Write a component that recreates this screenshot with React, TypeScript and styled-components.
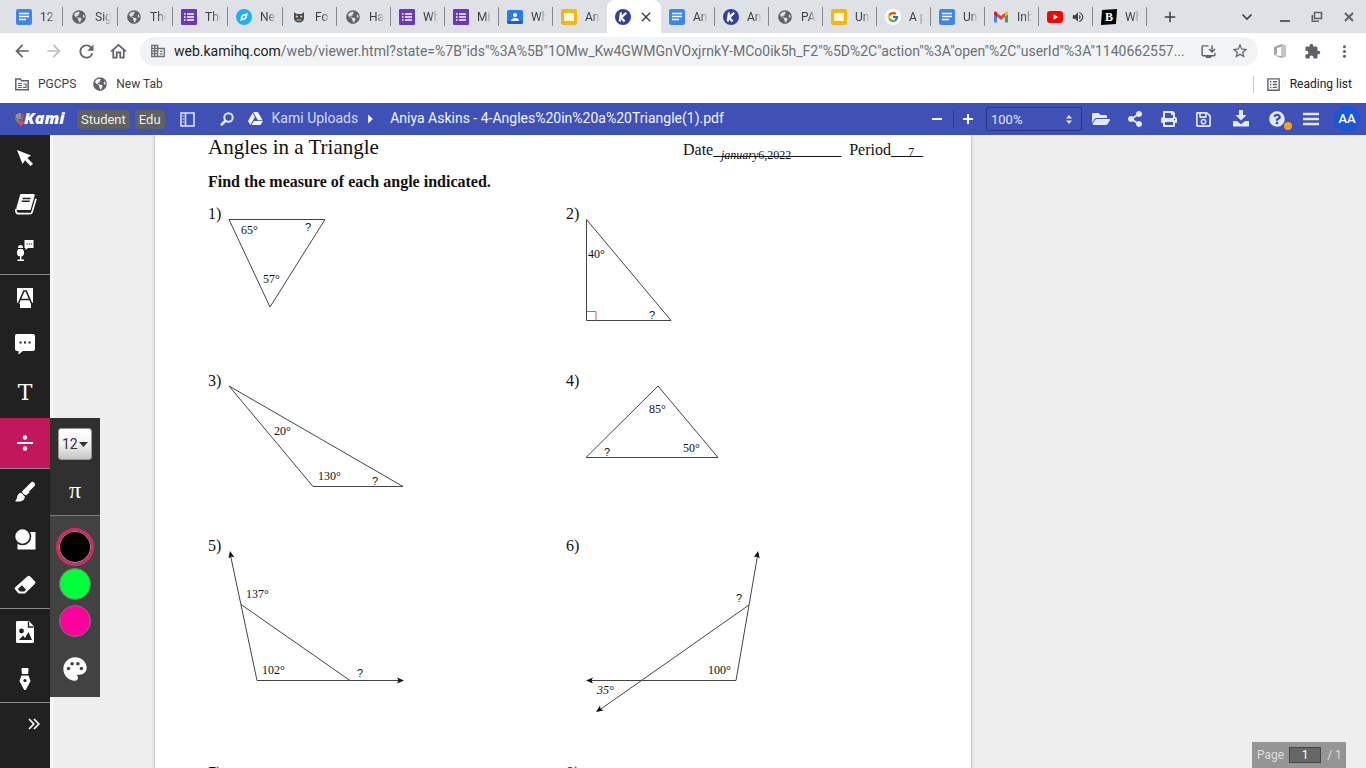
import React from "react";
import styled, { createGlobalStyle, css } from "styled-components";
import {
  MdArrowBack, MdArrowForward, MdRefresh, MdOutlineHome, MdStarBorder, MdExtension,
  MdMoreVert, MdAdd, MdClose, MdInstallDesktop, MdVolumeUp, MdArrowRight, MdPalette, MdOutlineListAlt,
} from "react-icons/md";
import {
  FaFolderOpen, FaShareAlt, FaPrint, FaRegSave, FaQuestionCircle, FaGoogleDrive, FaGlobeAmericas,
} from "react-icons/fa";
import { FcGoogle } from "react-icons/fc";

const Global = createGlobalStyle`
  *, *::before, *::after { box-sizing: border-box; }
  body { margin: 0; font-family: Roboto, "Liberation Sans", sans-serif; font-size: 14px; color: #3c4043; }
  button { border: 0; padding: 0; background: none; color: inherit; font: inherit; cursor: pointer; }
  a { color: inherit; text-decoration: none; }
  svg { display: block; flex: none; }
`;

const Window = styled.div`
  display: flex;
  flex-direction: column;
  height: 100vh;
  overflow: hidden;
`;

/* ---------- browser chrome ---------- */

const TabStrip = styled.div`
  display: flex;
  height: 33px;
  padding-left: 8px;
  background: #dee1e6;
`;

const Tab = styled.button<{ $active?: boolean; $first?: boolean; $line?: boolean }>`
  display: flex;
  align-items: center;
  gap: 8px;
  flex: 0 1 ${(p) => (p.$first ? 55 : 54)}px;
  min-width: 0;
  padding: 0 7px 0 8px;
  position: relative;
  font-size: 12px;
  ${(p) => p.$active && css`
    background: #fff;
    border-radius: 8px 8px 0 0;
    gap: 7px;
  `}
  ${(p) => p.$line && css`
    &::after {
      content: "";
      position: absolute;
      right: 0;
      top: 7px;
      height: 19px;
      width: 1px;
      background: #85888c;
    }
  `}
`;

const TabTitle = styled.span`
  flex: 1;
  min-width: 0;
  overflow: hidden;
  white-space: nowrap;
  text-align: left;
  mask-image: linear-gradient(to right, #000 50%, transparent);
`;

const TabGap = styled.div`
  flex: 1;
`;

const StripButton = styled.button<{ $w: number }>`
  display: flex;
  align-items: center;
  justify-content: center;
  width: ${(p) => p.$w}px;
  color: #3c4043;
`;

const NavBar = styled.div`
  display: flex;
  align-items: center;
  height: 36px;
  padding: 0 6px;
  background: #fff;
  color: #5f6368;
`;

const NavButton = styled.button<{ $dim?: boolean }>`
  display: flex;
  align-items: center;
  justify-content: center;
  width: 32px;
  height: 28px;
  color: ${(p) => (p.$dim ? "#babcbe" : "#5f6368")};
`;

const Address = styled.div`
  display: flex;
  align-items: center;
  flex: 1;
  min-width: 0;
  height: 29px;
  margin: 0 6px;
  padding: 0 2px 0 10px;
  border-radius: 15px;
  background: #f1f3f4;
`;

const Url = styled.div`
  flex: 1;
  min-width: 0;
  margin-left: 8px;
  overflow: hidden;
  white-space: nowrap;
  text-overflow: ellipsis;
  font-size: 14px;
  color: #6c7074;
  b { font-weight: 400; color: #202124; }
`;

const BookmarkBar = styled.div`
  display: flex;
  align-items: center;
  height: 34px;
  padding: 0 14px 4px 15px;
  background: #fff;
  font-size: 12px;
  gap: 17px;
`;

const Bookmark = styled.a<{ $last?: boolean }>`
  display: flex;
  align-items: center;
  gap: 9px;
  ${(p) => p.$last && css`
    gap: 8px;
    margin-left: auto;
    padding-left: 11px;
    border-left: 1px solid #c8cacd;
    color: #202124;
  `}
`;

/* ---------- Kami bar ---------- */

const AppBar = styled.header`
  display: flex;
  align-items: center;
  height: 32px;
  padding: 0 2px 0 14px;
  background: #3f51b5;
  color: #e4e8fb;
`;

const Logo = styled.a`
  display: flex;
  align-items: center;
  width: 63px;
`;

const LogoText = styled.span`
  margin-left: -3px;
  padding-bottom: 2px;
  font: italic 800 16px/20px "Open Sans", Lato, sans-serif;
  color: #fff;
`;

const Badge = styled.span`
  height: 19px;
  margin-right: 5px;
  padding: 0 4px;
  border-radius: 4px;
  background: #616161;
  color: #eee;
  font-size: 13px;
  line-height: 19px;
`;

const BarButton = styled.button<{ $w: number }>`
  display: flex;
  align-items: center;
  justify-content: center;
  position: relative;
  width: ${(p) => p.$w}px;
  height: 32px;
`;

const Crumb = styled.a`
  display: flex;
  align-items: center;
  gap: 9px;
  padding-bottom: 2px;
  white-space: nowrap;
  color: #d3d9f7;
`;

const FileName = styled.span`
  flex: 1;
  min-width: 0;
  margin-left: 8px;
  padding-bottom: 2px;
  overflow: hidden;
  white-space: nowrap;
  text-overflow: ellipsis;
  color: #f2f4ff;
`;

const BarLine = styled.span`
  width: 1px;
  height: 18px;
  background: #2f3e96;
`;

const ZoomBox = styled.label`
  display: flex;
  align-items: center;
  position: relative;
  margin: 0 2px 0 4px;
  svg { position: absolute; right: 10px; pointer-events: none; }
`;

const ZoomSelect = styled.select`
  appearance: none;
  width: 96px;
  height: 24px;
  padding: 0 4px;
  border: 1px solid #2b388a;
  border-radius: 2px;
  background: transparent;
  color: #e4e8fb;
  font: 13px Roboto, sans-serif;
`;

const Avatar = styled.span`
  width: 26px;
  height: 26px;
  border-radius: 50%;
  background: #1a56d8;
  color: #fff;
  font-size: 13px;
  font-weight: 500;
  line-height: 26px;
`;

const Dot = styled.i`
  position: absolute;
  right: 0;
  bottom: 5px;
  width: 8px;
  height: 8px;
  border-radius: 50%;
  background: #f9a01b;
`;

/* ---------- tools ---------- */

const Workspace = styled.div`
  display: flex;
  flex: 1;
  min-height: 0;
`;

const Sidebar = styled.nav`
  position: relative;
  z-index: 1;
  flex: 0 0 50px;
  background: #212121;
  color: #fff;
`;

const ToolGroup = styled.div`
  border-bottom: 1px solid #8a8a8a;
`;

const ToolSlot = styled.div`
  position: relative;
`;

const Tool = styled.button<{ $h?: number; $active?: boolean; $end?: boolean }>`
  display: flex;
  align-items: center;
  justify-content: ${(p) => (p.$end ? "flex-end" : "center")};
  width: 100%;
  height: ${(p) => p.$h ?? 46}px;
  padding: ${(p) => (p.$end ? "0 10px 0 0" : "0")};
  background: ${(p) => (p.$active ? "#c2185b" : "transparent")};
`;

const TextGlyph = styled.span`
  font: 22px/24px "DejaVu Serif", serif;
`;

const Flyout = styled.div`
  position: absolute;
  top: 0;
  left: 100%;
  width: 50px;
  background: #424242;
`;

const FlyoutTop = styled.div`
  display: flex;
  flex-direction: column;
  align-items: center;
  height: 98px;
  padding-top: 10px;
  border-bottom: 1px solid #808080;
  background: #303030;
`;

const SizeBox = styled.label`
  display: flex;
  align-items: center;
  position: relative;
  svg { position: absolute; right: 4px; pointer-events: none; }
`;

const SizeSelect = styled.select`
  appearance: none;
  width: 34px;
  height: 32px;
  padding: 0 0 0 3px;
  border: 1px solid #999;
  border-radius: 3px;
  background: linear-gradient(#fff, #f2f2f2 50%, #c4c4c4);
  color: #333;
  font: 14px Roboto, sans-serif;
`;

const PiButton = styled.button`
  height: 60px;
  padding-top: 4px;
  font: 24px/24px "Liberation Serif", serif;
`;

const Swatches = styled.div`
  display: flex;
  flex-direction: column;
  align-items: center;
  gap: 5px;
  height: 181px;
  padding-top: 12px;
`;

const Swatch = styled.button<{ $color: string; $picked?: boolean }>`
  flex: none;
  width: 32px;
  height: 32px;
  border: 1px solid #777;
  border-radius: 50%;
  background: ${(p) => p.$color};
  ${(p) => p.$picked && css`
    width: 38px;
    height: 38px;
    margin-bottom: -3px;
    border: 3px solid #d12a62;
    box-shadow: inset 0 0 0 1px #999;
  `}
`;

const PaletteButton = styled.button`
  margin-top: 13px;
`;

/* ---------- document ---------- */

const Viewer = styled.main`
  position: relative;
  flex: 1;
  min-width: 0;
  padding-left: 105px;
  overflow: hidden;
  background: #eee;
  box-shadow: inset 3px 0 #f7f7f7;
`;

const Paper = styled.article`
  width: 816px;
  min-height: 100%;
  padding: 0 48px 0 53px;
  background: #fff;
  box-shadow: 0 0 3px rgba(0, 0, 0, 0.35);
  color: #111;
  font: 16px/18px "Liberation Serif", serif;
`;

const PaperHead = styled.div`
  display: flex;
  align-items: flex-end;
  height: 24px;
`;

const Title = styled.h1`
  margin: 0 auto 0 0;
  font-size: 21px;
  line-height: 24px;
  font-weight: 400;
`;

const Blank = styled.span`
  position: relative;
  margin-left: 8px;
`;

const Note = styled.span<{ $x: number; $y: number }>`
  position: absolute;
  left: ${(p) => p.$x}px;
  top: ${(p) => p.$y}px;
  font-size: 12px;
  line-height: 14px;
`;

const Instruction = styled.h2`
  margin: 14px 0;
  font-size: 16px;
  line-height: 18px;
`;

const Problems = styled.div`
  display: grid;
  grid-template-columns: 358px 1fr;
  grid-template-rows: 167px 165px 227px 60px;
`;

const Problem = styled.section`
  display: flex;
  align-items: flex-start;
  min-height: 0;
`;

const Num = styled.span`
  width: 16px;
`;

const Figure = styled.svg`
  overflow: visible;
  fill: none;
  stroke: #444;
  stroke-width: 1;
  text { fill: #111; stroke: none; font: 12px "Liberation Serif", serif; }
  text.unknown { font: 11px "Liberation Sans", sans-serif; }
  text.typed { font-style: italic; }
  .head { fill: #111; stroke: none; }
`;

const PageBox = styled.div`
  display: flex;
  align-items: center;
  position: absolute;
  right: 20px;
  bottom: 0;
  width: 94px;
  height: 26px;
  padding-left: 5px;
  background: #959595;
  color: #ddd;
  font-size: 12px;
`;

const PageInput = styled.input`
  width: 32px;
  height: 16px;
  margin: 0 6px 0 5px;
  padding: 0;
  border: 1px solid #444;
  background: #666;
  color: #fff;
  font: 12px Roboto, sans-serif;
  text-align: center;
`;

/* ---------- drawn icons ---------- */

const DocsIcon = () => (
  <svg width="16" height="16"><rect width="16" height="16" rx="2" fill="#4285e8" /><path d="M3 4.5h10M3 7.5h10M3 10.5h7" stroke="#fff" strokeWidth="1.6" /></svg>
);
const FormsIcon = () => (
  <svg width="16" height="16"><rect width="16" height="16" rx="1" fill="#673ab7" /><path d="M6 5h7M6 8h7M6 11h7M3 5h1.6M3 8h1.6M3 11h1.6" stroke="#fff" strokeWidth="1.5" /></svg>
);
const SlidesIcon = () => (
  <svg width="16" height="16"><rect width="16" height="16" rx="2" fill="#f4b70a" /><rect x="3" y="4" width="10" height="8" fill="#fff8dc" /></svg>
);
const ContactIcon = () => (
  <svg width="16" height="16"><rect y="1" width="16" height="14" rx="2" fill="#2a7bea" /><path d="M0 12h16v1a2 2 0 0 1-2 2H2a2 2 0 0 1-2-2z" fill="#1a5cc8" /><circle cx="8" cy="6" r="2" fill="#fff" /><path d="M4 12c0-4 8-4 8 0z" fill="#fff" /></svg>
);
const KamiIcon = () => (
  <svg width="16" height="16"><circle cx="8" cy="8" r="8" fill="#33409c" /><path d="M6 3.5L4.8 12.5M11.2 3.8L6 8.6L9.6 12.5" stroke="#fff" strokeWidth="2.2" fill="none" /></svg>
);
const CompassIcon = () => (
  <svg width="16" height="16"><circle cx="8" cy="8" r="8" fill="#22aef2" /><path d="M5.2 10.8L6.5 6.5L10.8 5.2L9.5 9.5z" fill="none" stroke="#fff" strokeWidth="1.5" /></svg>
);
const CatIcon = () => (
  <svg width="16" height="16"><path d="M3 3l2.5 2h5L13 3v6c0 2.8-2 4.5-5 4.5S3 11.8 3 9z" fill="#4a4a4a" /><circle cx="5.8" cy="7.5" r="1.1" fill="#e8d9b0" /><circle cx="10.2" cy="7.5" r="1.1" fill="#e8d9b0" /><path d="M5.500 11h5" stroke="#bbb" /></svg>
);
const GmailIcon = () => (
  <svg width="16" height="16"><path d="M1 4v9.5h3V7z" fill="#4285f4" /><path d="M15 4v9.5h-3V7z" fill="#34a853" /><path d="M4 7.8V4l4 3 4-3v3.8L8 11z" fill="#ea4335" /><path d="M1 4c0-1.5 1.7-2 3-1v4.8L1 5.5z" fill="#c5221f" /><path d="M15 4c0-1.5-1.7-2-3-1v4.8l3-2.3z" fill="#fbbc04" /></svg>
);
const YoutubeIcon = () => (
  <svg width="16" height="16"><rect y="2" width="16" height="12" rx="3" fill="#f00" /><path d="M6.5 5.3v5.4L11 8z" fill="#fff" /></svg>
);
const BIcon = () => (
  <svg width="16" height="16"><path d="M1 1L16 0L15 15L0 16z" fill="#000" /><text x="4" y="12" fill="#fff" fontFamily="Liberation Serif, serif" fontWeight="700" fontSize="12">B</text></svg>
);
const GoogleIcon = () => (
  <svg width="16" height="16"><circle cx="8" cy="8" r="8" fill="#fff" /><FcGoogle x="2" y="2" size={12} /></svg>
);
const Globe = () => (
  <svg width="16" height="16"><FaGlobeAmericas x="1" y="1" size={14} color="#5f6368" /></svg>
);
const OfficeIcon = () => (
  <svg width="16" height="16"><path d="M2 4L9.5 1L14 2.5V13.5L9.5 15L2 12.3L9.5 13V3.8L5 5V11L2 12.3z" fill="#a3a3a3" /><path d="M9.5 1L14 2.5V13.5L9.5 15z" fill="#c4c4c4" /></svg>
);
const CompanyIcon = () => (
  <svg width="16" height="16" fill="none" stroke="#6c7074" strokeWidth="1.3"><path d="M1.7 2.5h6v11h-6zM7.7 5.5h6.6v8H7.7M1.7 5.3h6M1.7 8h6M1.7 10.7h6M4.7 2.5v11M10 8.3h2.5M10 10.9h2.5" /></svg>
);
const FolderIcon = () => (
  <svg width="14" height="14" fill="none" stroke="#5f6368" strokeWidth="1.5"><path d="M.8 2h4.5l1.3 1.7h6.6v9H.8z" /><path d="M3 6.5h4M3 8.5h4M3 10.5h4M8.5 7h2.5v3.5H8" strokeWidth="1.2" /></svg>
);
const PanelIcon = () => (
  <svg width="15" height="15" fill="none" stroke="currentColor" strokeWidth="1.5"><path d="M1 1h13v13H1zM5.5 1v13" /><path d="M2.5 4h2M2.5 7h2M2.5 10h2" strokeWidth="1" /></svg>
);
const SearchIcon = () => (
  <svg width="14" height="14" fill="none" stroke="currentColor" strokeWidth="2"><circle cx="8.5" cy="5.5" r="4.2" /><path d="M5.5 8.8L1 13.2" strokeWidth="2.6" /></svg>
);
const HandIcon = () => (
  <svg width="13" height="16" fill="none" strokeWidth="2.6"><path d="M3 3v6" stroke="#f06292" /><path d="M5.600 2v6" stroke="#4db6ac" /><path d="M8.200 3v6" stroke="#e53935" /><path d="M3 9l4 3.500 2-2" stroke="#ef4056" strokeWidth="3.500" /><path d="M1.500 7l2.500 3" stroke="#43a047" strokeWidth="2" /></svg>
);
const DownloadIcon = () => (
  <svg width="18" height="18" fill="currentColor"><path d="M7 0h4v5h3.500L9 10.500L3.500 5H7z" /><path d="M1 11h4l4 3.300 4-3.300h4V16.500H1z" /></svg>
);
const MenuIcon = () => (
  <svg width="16" height="14" stroke="currentColor" strokeWidth="2.4"><path d="M0 2h16M0 7h16M0 12h16" /></svg>
);
const CursorIcon = () => (
  <svg width="18" height="18" fill="#fff"><path d="M1 1L15 6.5L11.3 9L17 14.8L14.5 17L9 11.3L6.5 15z" /></svg>
);
const BookIcon = () => (
  <svg width="24" height="24"><path d="M8 2h12.5c1 0 1.5.8 1.2 1.6L17.5 18H5.5c-2 0-2.600-1-2-2.6L7 3.2C7.2 2.4 7.500 2 8 2z" fill="#fff" /><path d="M9.5 6.5h8M8.7 9.3h8" stroke="#212121" strokeWidth="1.5" /><path d="M3 17c-.5 3 .5 4.7 2.5 4.7H17c1 0 1.7-.5 2-1.5l4-13.500" fill="none" stroke="#fff" strokeWidth="1.7" /></svg>
);
const MicIcon = () => (
  <svg width="20" height="24" fill="#fff"><path d="M10 1h8.5v8H13l-2.500 2V9H9.500V1z" /><rect x="3" y="6" width="5" height="9" rx="2.5" /><path d="M2 11.5h7v2.5a3.5 3.5 0 0 1-7 0z" /><path d="M5 17h1.4v3.5H9V22H2.5v-1.500H5z" /><path d="M3 9.5h5" stroke="#212121" /><path d="M11.5 5h1.200M13.700 5h1.200M15.900 5h1.200" stroke="#212121" strokeWidth="1.2" /></svg>
);
const MarkIcon = () => (
  <svg width="18" height="22"><path d="M1 1h16v14.5l-2 1.500v4H4v-4l-3-1.500z" fill="#fff" /><path d="M2 17.500L7.800 4h2.400L16 17.500M5 12.500h8" fill="none" stroke="#212121" strokeWidth="1.6" /></svg>
);
const CommentIcon = () => (
  <svg width="22" height="22"><path d="M3 1h16a2 2 0 0 1 2 2v13a2 2 0 0 1-2 2H9l-4.500 3.500V18H3a2 2 0 0 1-2-2V3a2 2 0 0 1 2-2z" fill="#fff" /><path d="M5.500 9.500h2M10 9.500h2M14.500 9.500h2" stroke="#212121" strokeWidth="2" /></svg>
);
const DivideIcon = () => (
  <svg width="16" height="16" fill="#fff"><rect y="7" width="16" height="2" /><circle cx="8" cy="2.5" r="2.2" /><circle cx="8" cy="13.5" r="2.2" /></svg>
);
const BrushIcon = () => (
  <svg width="22" height="22"><path d="M18.500 3.500L11 11" stroke="#fff" strokeWidth="5" strokeLinecap="round" /><path d="M11.500 7.500l4 4L12 14.500L8 10.500z" fill="#fff" /><path d="M7.200 11.800l3.600 3.600c.6 4-5 6.300-10 4.600 2-.8 1.800-2.600 2.400-4.600.6-2 2.200-3.400 4-3.600z" fill="#fff" /></svg>
);
const EraserIcon = () => (
  <svg width="22" height="20"><path d="M1 12.500L13.500 1.300q1.300-1 2.500 0L21 6.500q1 1.200 0 2.300L11.500 18q-.6.500-1.400.5H5.500q-.8 0-1.300-.6L1 14.200q-.7-.9 0-1.700z" fill="#fff" /><path d="M3.800 14L8 10.300L12 14.800L10.200 16.500H6z" fill="#212121" /></svg>
);
const ShapesIcon = () => (
  <svg width="22" height="22"><rect x="3.5" y="4" width="18" height="17.5" fill="#fff" /><circle cx="8.5" cy="8.5" r="8" fill="#fff" stroke="#212121" strokeWidth="1.6" /></svg>
);
const ImageIcon = () => (
  <svg width="20" height="24"><path d="M2 1h12l5 5.5V21.500A1.500 1.500 0 0 1 17.500 23h-15A1.500 1.500 0 0 1 1 21.500V2.500A1.500 1.500 0 0 1 2 1z" fill="#fff" /><path d="M13.500 1.500v5.500h5" fill="none" stroke="#212121" strokeWidth="1.4" /><circle cx="6.5" cy="11" r="2.4" fill="#212121" /><path d="M4 20l4-4.500 2 2.500 3.500-6L17 20z" fill="#212121" /></svg>
);
const NibIcon = () => (
  <svg width="14" height="24"><path d="M4.500 1h5c.8 0 1.200.6 1 1.400L10 7H4L3.500 2.400C3.300 1.600 3.700 1 4.500 1z" fill="#fff" /><path d="M3.500 8.500h7L12.500 14L7.800 23h-1.600L1.500 14z" fill="#fff" /><circle cx="7" cy="13.5" r="1.6" fill="#212121" /></svg>
);
const MoreIcon = () => (
  <svg width="12" height="12" fill="none" stroke="#fff" strokeWidth="1.7"><path d="M1 1l4.800 5L1 11M6 1l4.800 5L6 11" /></svg>
);
const Caret = () => <svg width="9" height="5" fill="#333"><path d="M0 0h9L4.500 5z" /></svg>;
const UpDown = () => <svg width="6" height="9" fill="currentColor"><path d="M3 0l3 3.500H0zM3 9l3-3.500H0z" /></svg>;

/* ---------- data ---------- */

const tabs: { icon: React.FC; title: string }[] = [
  { icon: DocsIcon, title: "12." },
  { icon: Globe, title: "Sig" },
  { icon: Globe, title: "The" },
  { icon: FormsIcon, title: "The" },
  { icon: CompassIcon, title: "Ne" },
  { icon: CatIcon, title: "Fo" },
  { icon: Globe, title: "Ha" },
  { icon: FormsIcon, title: "Wh" },
  { icon: FormsIcon, title: "Mi" },
  { icon: ContactIcon, title: "Wh" },
  { icon: SlidesIcon, title: "An" },
  { icon: KamiIcon, title: "" },
  { icon: DocsIcon, title: "An" },
  { icon: KamiIcon, title: "An" },
  { icon: Globe, title: "PA" },
  { icon: SlidesIcon, title: "Un" },
  { icon: GoogleIcon, title: "A p" },
  { icon: DocsIcon, title: "Un" },
  { icon: GmailIcon, title: "Inb" },
  { icon: YoutubeIcon, title: "" },
  { icon: BIcon, title: "Wh" },
];
const ACTIVE = 11;
const PLAYING = 19;

type Label = [string, number, number];
type Head = [number, number, number];
type Drawing = { lines: string; labels: Label[]; heads?: Head[]; corner?: string };

const drawings: Drawing[] = [
  { lines: "M5 14.5H101L46 102z", labels: [["65°", 17, 29], ["?", 81, 26], ["57°", 39, 78]] },
  { lines: "M4.5 14.5V115.5H89z", corner: "M5 106.5h9v9", labels: [["40°", 6, 53], ["?", 67, 114]] },
  { lines: "M5 14L89 114.5H179z", labels: [["20°", 50, 63], ["130°", 94, 108], ["?", 148, 113]] },
  { lines: "M4 85.5L76 14L136 85.5z", labels: [["85°", 67, 41], ["50°", 101, 80], ["?", 22, 84]] },
  {
    lines: "M6 16L33 143.5H178M17 67.5L126 143.5",
    heads: [[6, 14, -102], [180, 143.5, 0]],
    labels: [["137°", 22, 61], ["102°", 38, 137], ["?", 133, 140]],
  },
  {
    lines: "M176 16L154 143.5H6M167 68L16 174",
    heads: [[176, 14, -80], [4, 143.5, 180], [14, 175, 145]],
    labels: [["100°", 126, 137], ["35°", 15, 157], ["?", 154, 65]],
  },
];

const labelClass = (t: string) => (t === "?" ? "unknown" : t === "35°" ? "typed" : undefined);

const ProblemFigure = ({ d }: { d: Drawing }) => (
  <Figure width="184" height="150">
    <path d={d.lines} />
    {d.corner && <path d={d.corner} stroke="#e2574c" />}
    {d.heads?.map(([x, y, a]) => (
      <path key={`${x}-${y}`} className="head" d="M0 0L-7 -3L-5.5 0L-7 3z" transform={`translate(${x} ${y}) rotate(${a})`} />
    ))}
    {d.labels.map(([t, x, y]) => (
      <text key={t} x={x} y={y} className={labelClass(t)}>{t}</text>
    ))}
  </Figure>
);

export default function App() {
  return (
    <Window>
      <Global />
      <TabStrip>
        {tabs.map(({ icon: Icon, title }, i) => (
          <Tab key={i} $active={i === ACTIVE} $first={i < 5} $line={i !== ACTIVE && i !== ACTIVE - 1} aria-label={title || "Tab"}>
            <Icon />
            {i === ACTIVE ? <MdClose size={16} /> : i === PLAYING ? <MdVolumeUp size={14} /> : <TabTitle>{title}</TabTitle>}
          </Tab>
        ))}
        <StripButton $w={46} aria-label="New tab"><MdAdd size={18} /></StripButton>
        <TabGap />
        <StripButton $w={42} aria-label="Search tabs">
          <svg width="12" height="8" fill="none" stroke="#3c4043" strokeWidth="1.6"><path d="M1.5 1.5L6 6L10.5 1.5" /></svg>
        </StripButton>
        <StripButton $w={34} aria-label="Minimize">
          <svg width="12" height="12" stroke="#5f6368" strokeWidth="2"><path d="M1 10h10" /></svg>
        </StripButton>
        <StripButton $w={30} aria-label="Restore">
          <svg width="12" height="12" fill="none" stroke="#5f6368" strokeWidth="1.6"><path d="M3.5 1.5h7v6h-7zM1.300 4v6.200H8" /></svg>
        </StripButton>
        <StripButton $w={34} aria-label="Close">
          <svg width="12" height="12" stroke="#5f6368" strokeWidth="2"><path d="M2 2l8 8M10 2l-8 8" /></svg>
        </StripButton>
      </TabStrip>

      <NavBar>
        <NavButton aria-label="Back"><MdArrowBack size={20} /></NavButton>
        <NavButton $dim aria-label="Forward"><MdArrowForward size={20} /></NavButton>
        <NavButton aria-label="Reload"><MdRefresh size={21} /></NavButton>
        <NavButton aria-label="Home"><MdOutlineHome size={21} /></NavButton>
        <Address>
          <CompanyIcon />
          <Url>
            <b>web.kamihq.com</b>
            {'/web/viewer.html?state=%7B"ids"%3A%5B"1OMw_Kw4GWMGnVOxjrnkY-MCo0ik5h_F2"%5D%2C"action"%3A"open"%2C"userId"%3A"1140662557...'}
          </Url>
          <NavButton aria-label="Install"><MdInstallDesktop size={17} /></NavButton>
          <NavButton aria-label="Bookmark"><MdStarBorder size={18} /></NavButton>
        </Address>
        <NavButton aria-label="Office"><OfficeIcon /></NavButton>
        <NavButton aria-label="Extensions"><MdExtension size={17} /></NavButton>
        <NavButton aria-label="Menu"><MdMoreVert size={19} /></NavButton>
      </NavBar>

      <BookmarkBar>
        <Bookmark href="#"><FolderIcon />PGCPS</Bookmark>
        <Bookmark href="#"><FaGlobeAmericas size={14} color="#5f6368" />New Tab</Bookmark>
        <Bookmark href="#" $last><MdOutlineListAlt size={17} color="#5f6368" />Reading list</Bookmark>
      </BookmarkBar>

      <AppBar>
        <Logo href="#"><HandIcon /><LogoText>Kami</LogoText></Logo>
        <Badge>Student</Badge>
        <Badge>Edu</Badge>
        <BarButton $w={36} aria-label="Toggle panel"><PanelIcon /></BarButton>
        <BarButton $w={42} aria-label="Search"><SearchIcon /></BarButton>
        <Crumb href="#"><FaGoogleDrive size={15} color="#f2f4ff" />Kami Uploads</Crumb>
        <BarButton $w={24} aria-label="Open folder"><MdArrowRight size={22} color="#fff" /></BarButton>
        <FileName>Aniya Askins - 4-Angles%20in%20a%20Triangle(1).pdf</FileName>
        <BarButton $w={32} aria-label="Zoom out">
          <svg width="10" height="10" stroke="#fff" strokeWidth="2"><path d="M0 5h10" /></svg>
        </BarButton>
        <BarLine />
        <BarButton $w={28} aria-label="Zoom in">
          <svg width="10" height="10" stroke="#fff" strokeWidth="2"><path d="M0 5h10M5 0v10" /></svg>
        </BarButton>
        <ZoomBox>
          <ZoomSelect aria-label="Zoom level" defaultValue="100%"><option>100%</option></ZoomSelect>
          <UpDown />
        </ZoomBox>
        <BarButton $w={34} aria-label="Open"><FaFolderOpen size={18} /></BarButton>
        <BarButton $w={34} aria-label="Share"><FaShareAlt size={16} /></BarButton>
        <BarButton $w={34} aria-label="Print"><FaPrint size={16} /></BarButton>
        <BarButton $w={34} aria-label="Save"><FaRegSave size={17} /></BarButton>
        <BarButton $w={42} aria-label="Download"><DownloadIcon /></BarButton>
        <BarButton $w={30} aria-label="Help"><FaQuestionCircle size={16} /><Dot /></BarButton>
        <BarButton $w={38} aria-label="Menu"><MenuIcon /></BarButton>
        <BarButton $w={34} aria-label="Account"><Avatar>AA</Avatar></BarButton>
      </AppBar>

      <Workspace>
        <Sidebar>
          <ToolGroup>
            <Tool aria-label="Select"><CursorIcon /></Tool>
            <Tool aria-label="Dictionary"><BookIcon /></Tool>
            <Tool $h={47} aria-label="Read aloud"><MicIcon /></Tool>
          </ToolGroup>
          <ToolGroup>
            <Tool aria-label="Markup"><MarkIcon /></Tool>
            <Tool aria-label="Comment"><CommentIcon /></Tool>
            <Tool $h={51} aria-label="Text"><TextGlyph>T</TextGlyph></Tool>
            <ToolSlot>
              <Tool $h={50} $active aria-label="Equation"><DivideIcon /></Tool>
              <Flyout>
                <FlyoutTop>
                  <SizeBox>
                    <SizeSelect aria-label="Font size" defaultValue="12"><option>12</option></SizeSelect>
                    <Caret />
                  </SizeBox>
                  <PiButton>π</PiButton>
                </FlyoutTop>
                <Swatches>
                  <Swatch $color="#000" $picked aria-label="Black" />
                  <Swatch $color="#00ff38" aria-label="Green" />
                  <Swatch $color="#ff009d" aria-label="Pink" />
                  <PaletteButton aria-label="More colours"><MdPalette size={28} /></PaletteButton>
                </Swatches>
              </Flyout>
            </ToolSlot>
          </ToolGroup>
          <ToolGroup>
            <Tool aria-label="Draw"><BrushIcon /></Tool>
            <Tool $h={47} aria-label="Shapes"><ShapesIcon /></Tool>
            <Tool aria-label="Eraser"><EraserIcon /></Tool>
          </ToolGroup>
          <ToolGroup>
            <Tool aria-label="Image"><ImageIcon /></Tool>
            <Tool $h={47} aria-label="Signature"><NibIcon /></Tool>
          </ToolGroup>
          <Tool $h={42} $end aria-label="Expand"><MoreIcon /></Tool>
        </Sidebar>

        <Viewer>
          <Paper>
            <PaperHead>
              <Title>Angles in a Triangle</Title>
              <Blank>Date________________<Note $x={38} $y={7}><i>january</i>6,2022</Note></Blank>
              <Blank>Period____<Note $x={59} $y={4}>7</Note></Blank>
            </PaperHead>
            <Instruction>Find the measure of each angle indicated.</Instruction>
            <Problems>
              {Array.from({ length: 8 }, (_, i) => (
                <Problem key={i}>
                  <Num>{i + 1})</Num>
                  {drawings[i] && <ProblemFigure d={drawings[i]} />}
                </Problem>
              ))}
            </Problems>
          </Paper>
          <PageBox>
            <label htmlFor="page">Page</label>
            <PageInput id="page" defaultValue="1" />
            / 1
          </PageBox>
        </Viewer>
      </Workspace>
    </Window>
  );
}
